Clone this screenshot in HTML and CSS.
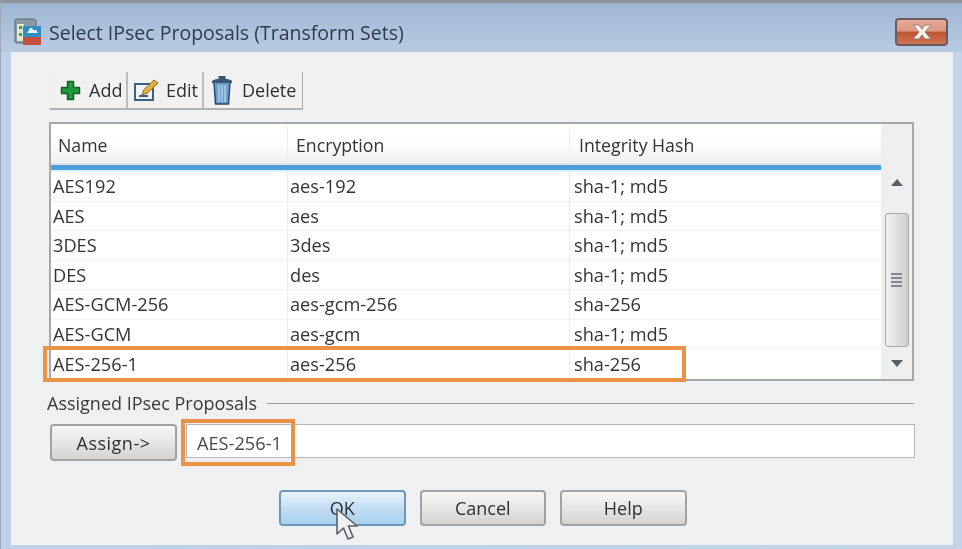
FILE: index.html
```html
<!DOCTYPE html>
<html lang="en">
<head>
<meta charset="utf-8">
<title>Select IPsec Proposals (Transform Sets)</title>
<link rel="stylesheet" href="styles.css">
</head>
<body>
<div class="window">
  <div class="titlebar">
    <svg class="app-icon" width="28" height="28" viewBox="0 0 28 28">
      <rect x="1" y="1" width="21" height="24" rx="2" fill="#8d9aa4" stroke="#5f6a72"/>
      <rect x="3" y="6" width="7" height="17" fill="#dfe8d4"/>
      <rect x="5" y="8" width="3" height="3" fill="#3da34a"/>
      <rect x="5" y="15" width="3" height="3" fill="#3da34a"/>
      <rect x="9" y="8" width="18" height="12" fill="#2f8fc4"/>
      <rect x="9" y="19" width="18" height="8" fill="#c4503f"/>
      <path d="M13 15h11l-2-3h-3l-1-2h-2l-1 2z" fill="#e8f5fb"/>
    </svg>
    <span class="title">Select IPsec Proposals (Transform Sets)</span>
    <button class="close" aria-label="Close"><svg width="26" height="18" viewBox="0 0 26 18"><path d="M4 2h6l3 4 3-4h6l-6 7 6 7h-6l-3-4-3 4H4l6-7z" fill="#f6f0ea" stroke="#7a6558" stroke-width=".7"/></svg></button>
  </div>
  <div class="content">
    <div class="toolbar">
      <div class="tool tool-add">
        <svg width="21" height="21" viewBox="0 0 21 21"><path d="M7.500 1.500h6v6h6v6h-6v6h-6v-6h-6v-6h6z" fill="#1f9a3c" stroke="#135c25" stroke-width="1.500" stroke-linejoin="round"/></svg>
        <span>Add</span>
      </div>
      <div class="tool tool-edit">
        <svg width="27" height="24" viewBox="0 0 27 24"><rect x="2" y="6" width="18" height="16" fill="#eef3f8" stroke="#3d5d85" stroke-width="2"/><path d="M9 17l1.500-5L21 2l4 3-10.500 10z" fill="#e0b13f" stroke="#8c6a1f"/><path d="M6 18h9" stroke="#3d5d85" stroke-width="2"/></svg>
        <span>Edit</span>
      </div>
      <div class="tool tool-del">
        <svg width="22" height="32" viewBox="0 0 22 32"><path d="M3 8h16l-1.500 22h-13z" fill="#6e9fd0" stroke="#2c4a6b" stroke-width="1.500"/><path d="M1 7c2-3 18-3 20 0v2H1z" fill="#3a5675"/><rect x="7.500" y="2" width="7" height="3" fill="#3a5675"/><path d="M8 11v17M11 11v17M14 11v17" stroke="#c1d8ee" stroke-width="1.200"/></svg>
        <span>Delete</span>
      </div>
    </div>

    <div class="table">
      <div class="table-main">
        <div class="row head">
          <div class="cell c1">Name</div>
          <div class="cell c2">Encryption</div>
          <div class="cell c3">Integrity Hash</div>
        </div>
        <div class="sel-line"></div>
        <div class="row"><div class="cell c1">AES192</div><div class="cell c2">aes-192</div><div class="cell c3">sha-1; md5</div></div>
        <div class="row"><div class="cell c1">AES</div><div class="cell c2">aes</div><div class="cell c3">sha-1; md5</div></div>
        <div class="row"><div class="cell c1">3DES</div><div class="cell c2">3des</div><div class="cell c3">sha-1; md5</div></div>
        <div class="row"><div class="cell c1">DES</div><div class="cell c2">des</div><div class="cell c3">sha-1; md5</div></div>
        <div class="row"><div class="cell c1">AES-GCM-256</div><div class="cell c2">aes-gcm-256</div><div class="cell c3">sha-256</div></div>
        <div class="row"><div class="cell c1">AES-GCM</div><div class="cell c2">aes-gcm</div><div class="cell c3">sha-1; md5</div></div>
        <div class="row last"><div class="cell c1">AES-256-1</div><div class="cell c2">aes-256</div><div class="cell c3">sha-256</div></div>
      </div>
      <div class="scrollbar">
        <svg class="arrow-up" width="12" height="7" viewBox="0 0 12 7"><path d="M6 0l6 7H0z" fill="#5a5f64"/></svg>
        <div class="thumb"><span></span><span></span><span></span><span></span></div>
        <svg class="arrow-down" width="12" height="7" viewBox="0 0 12 7"><path d="M0 0h12L6 7z" fill="#5a5f64"/></svg>
      </div>
      <div class="mark mark-row"></div>
    </div>

    <div class="group-head"><span>Assigned IPsec Proposals</span><i></i></div>
    <div class="assign">
      <button class="btn btn-assign">Assign-&gt;</button>
      <div class="field">AES-256-1<div class="mark mark-field"></div></div>
    </div>

    <div class="actions">
      <button class="btn btn-act btn-ok">OK
        <svg class="cursor" width="28" height="36" viewBox="0 0 28 36"><path d="M3 2v25l6.500-6 4.500 11 5-2-4.500-11H23z" fill="#eff0f2" stroke="#5c5f63" stroke-width="1.600" stroke-linejoin="round"/></svg>
      </button>
      <button class="btn btn-act">Cancel</button>
      <button class="btn btn-act">Help</button>
    </div>
  </div>
</div>
</body>
</html>
```

FILE: styles.css
```css
html, body {
  margin: 0;
  padding: 0;
  background: #c6d5e9;
}
body {
  width: 962px;
  height: 549px;
  overflow: hidden;
  font-family: "Open Sans", "Noto Sans", sans-serif;
  color: #2b2b2b;
}
.window {
  box-sizing: border-box;
  width: 962px;
  height: 549px;
  border-top: 3px solid #8f9396;
  border-left: 1px solid #9aa8b8;
  padding: 0 9px 4px 10px;
  display: flex;
  flex-direction: column;
  background: linear-gradient(90deg, #bfd1e8, #c3d4e9);
  filter: blur(0.6px);
}
.titlebar {
  height: 49px;
  flex: none;
  margin: 0 -9px 0 -10px;
  padding: 5px 14px 0 13px;
  box-sizing: border-box;
  display: flex;
  align-items: center;
  background: linear-gradient(180deg, #9fb6d2, #b8cbe3);
}
.app-icon { flex: none; margin-top: 3px; }
.title {
  margin-left: 7px;
  margin-top: 5px;
  font-size: 19.500px;
  color: #2e3b4e;
  white-space: nowrap;
}
.close {
  margin-left: auto;
  margin-top: 4px;
  width: 53px;
  height: 28px;
  padding: 0;
  display: flex;
  align-items: center;
  justify-content: center;
  border: 2px solid #6b5a60;
  border-radius: 4px;
  background: linear-gradient(180deg, #e6ab98 0, #dc9880 45%, #bd5632 52%, #cf7355 100%);
}
.content {
  flex: 1;
  background: #eff0f2;
  padding: 20px 38px 0 38px;
  display: flex;
  flex-direction: column;
}
.toolbar {
  display: flex;
  height: 38px;
  width: 253px;
  flex: none;
  border-right: 1px solid #a9aaab;
  border-bottom: 2px solid #b2b3b4;
  box-sizing: border-box;
  background: #f1f1f2;
  margin-left: 1px;
}
.tool {
  display: flex;
  align-items: center;
  font-size: 18px;
  box-sizing: border-box;
  border-right: 2px solid #bcbdbe;
  color: #2f2f2f;
}
.tool:last-child { border-right: 0; }
.tool-add { width: 78px; padding-left: 10px; gap: 8px; }
.tool-edit { width: 76px; padding-left: 5px; gap: 6px; }
.tool-del { flex: 1; padding-left: 7px; gap: 9px; }
.table {
  position: relative;
  margin-top: 12px;
  box-sizing: border-box;
  width: 865px;
  height: 259px;
  flex: none;
  display: flex;
  background: #fff;
  border: 2px solid #a7a8a9;
}
.table-main { width: 830px; flex: none; }
.row {
  display: flex;
  height: 29.500px;
  align-items: center;
  border-bottom: 1px solid #f3f3f3;
  box-sizing: border-box;
  font-size: 18.200px;
  color: #333;
}
.row.last { border-bottom: 0; }
.row.head {
  height: 41px;
  border-bottom: 2px solid #e4e3e9;
  background: linear-gradient(180deg, #fff 45%, #f0f0f2);
  padding-top: 2px;
  font-size: 17.700px;
}
.cell { box-sizing: border-box; white-space: nowrap; }
.c1 { width: 237px; padding-left: 2px; border-right: 1px solid #ecedee; align-self: stretch; display: flex; align-items: center; }
.c2 { width: 282px; padding-left: 2px; border-right: 1px solid #ecedee; align-self: stretch; display: flex; align-items: center; }
.c3 { flex: 1; padding-left: 4px; }
.head .c1 { padding-left: 7px; }
.head .c2 { padding-left: 8px; }
.head .c3 { padding-left: 9px; }
.sel-line {
  height: 5px;
  background: #4f9fdc;
  margin-bottom: 2px;
  box-shadow: 0 2px 2px #d9edfb;
}
.scrollbar {
  flex: 1;
  background: #eeeff0;
  display: flex;
  flex-direction: column;
  align-items: center;
  padding-top: 55px;
}
.arrow-up { flex: none; }
.thumb {
  box-sizing: border-box;
  width: 24px;
  height: 134px;
  margin-top: 27px;
  border: 1px solid #a9aaab;
  border-radius: 3px;
  background: linear-gradient(90deg, #f0f1f2, #d5d6d7 80%, #c8c9ca);
  display: flex;
  flex-direction: column;
  align-items: center;
  justify-content: center;
  gap: 2px;
}
.thumb span { width: 11px; height: 2px; background: #85888c; }
.arrow-down { flex: none; margin-top: 13px; }
.mark {
  position: absolute;
  box-sizing: border-box;
  border: 4px solid #ea9245;
  pointer-events: none;
}
.mark-row {
  left: -8px;
  top: 222px;
  width: 643px;
  height: 36px;
}
.group-head {
  display: flex;
  align-items: center;
  margin: 8px 0 0 -2px;
  height: 28px;
  font-size: 18px;
  color: #3a3a3a;
}
.group-head i {
  flex: 1;
  height: 1px;
  background: #9a9b9c;
  margin-left: 10px;
  margin-right: 1px;
}
.assign {
  display: flex;
  align-items: flex-start;
  margin-top: 7px;
  height: 37px;
  flex: none;
}
.btn {
  font: inherit;
  font-size: 18px;
  color: #2f2f2f;
  padding: 0;
  border: 2px solid #a1a2a3;
  border-radius: 4px;
  background: linear-gradient(180deg, #f7f7f7, #e6e6e6 50%, #d3d3d3);
}
.btn-assign {
  width: 127px;
  height: 37px;
  margin-left: 1px;
  letter-spacing: 0.5px;
}
.field {
  position: relative;
  box-sizing: border-box;
  flex: 1;
  height: 34px;
  margin-left: 9px;
  padding-left: 10px;
  background: #fff;
  border: 1px solid #b4b5b6;
  font-size: 18.200px;
  line-height: 36px;
  color: #4a4a4a;
}
.mark-field {
  left: -6px;
  top: -6px;
  width: 114px;
  height: 47px;
}
.actions {
  display: flex;
  margin: 29px 0 0 230px;
  gap: 14px;
}
.btn-act {
  position: relative;
  width: 126.500px;
  height: 36px;
}
.btn-ok {
  border-color: #6d97b9;
  background: linear-gradient(180deg, #e8f3fb, #bfdcf2 55%, #a9d0ee);
}
.cursor {
  position: absolute;
  left: 53px;
  top: 15px;
}
```
